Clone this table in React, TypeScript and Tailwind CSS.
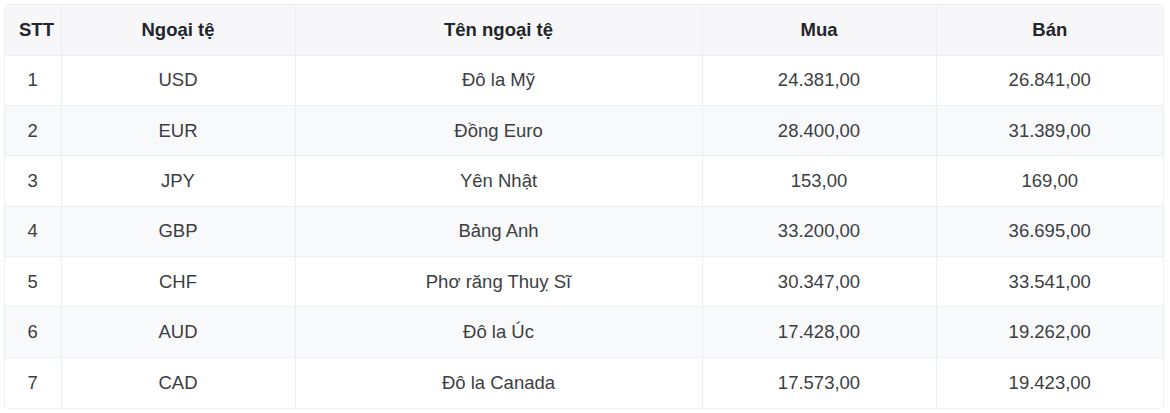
import React from "react";

interface Rate {
  code: string;
  name: string;
  buy: string;
  sell: string;
}

const RATES: Rate[] = [
  { code: "USD", name: "Đô la Mỹ", buy: "24.381,00", sell: "26.841,00" },
  { code: "EUR", name: "Đồng Euro", buy: "28.400,00", sell: "31.389,00" },
  { code: "JPY", name: "Yên Nhật", buy: "153,00", sell: "169,00" },
  { code: "GBP", name: "Bảng Anh", buy: "33.200,00", sell: "36.695,00" },
  { code: "CHF", name: "Phơ răng Thuỵ Sĩ", buy: "30.347,00", sell: "33.541,00" },
  { code: "AUD", name: "Đô la Úc", buy: "17.428,00", sell: "19.262,00" },
  { code: "CAD", name: "Đô la Canada", buy: "17.573,00", sell: "19.423,00" },
];

export default function App() {
  return (
    <div
      className="w-[1170px] h-[413px] bg-white pt-[4px] pl-[4px]"
      style={{ fontFamily: '"Liberation Sans", Arial, sans-serif' }}
    >
      <div className="w-[1160px] rounded-md border border-[#eceef2] overflow-hidden">
        <table className="w-full table-fixed border-collapse text-[18.5px]">
          <colgroup>
            <col className="w-[56px]" />
            <col className="w-[234px]" />
            <col className="w-[407px]" />
            <col className="w-[234px]" />
            <col />
          </colgroup>
          <thead>
            <tr className="h-[50px] bg-[#f7f7f9]">
              {["STT", "Ngoại tệ", "Tên ngoại tệ", "Mua", "Bán"].map((h, i) => (
                <th
                  key={h}
                  className={`px-[14px] whitespace-nowrap font-bold text-[#222529] text-center align-middle border-b border-[#eceef2] ${
                    i > 0 ? "border-l" : ""
                  }`}
                >
                  {h}
                </th>
              ))}
            </tr>
          </thead>
          <tbody>
            {RATES.map((r, i) => (
              <tr
                key={r.code}
                className={`h-[50.4px] text-[#3c3e42] ${i % 2 === 1 ? "bg-[#f8f9fb]" : "bg-white"}`}
              >
                <td className={`text-center ${i < RATES.length - 1 ? "border-b border-[#eceef2]" : ""}`}>
                  {i + 1}
                </td>
                <td className={`text-center border-l border-[#eceef2] ${i < RATES.length - 1 ? "border-b" : ""}`}>
                  {r.code}
                </td>
                <td className={`text-center border-l border-[#eceef2] ${i < RATES.length - 1 ? "border-b" : ""}`}>
                  {r.name}
                </td>
                <td className={`text-center border-l border-[#eceef2] ${i < RATES.length - 1 ? "border-b" : ""}`}>
                  {r.buy}
                </td>
                <td className={`text-center border-l border-[#eceef2] ${i < RATES.length - 1 ? "border-b" : ""}`}>
                  {r.sell}
                </td>
              </tr>
            ))}
          </tbody>
        </table>
      </div>
    </div>
  );
}
